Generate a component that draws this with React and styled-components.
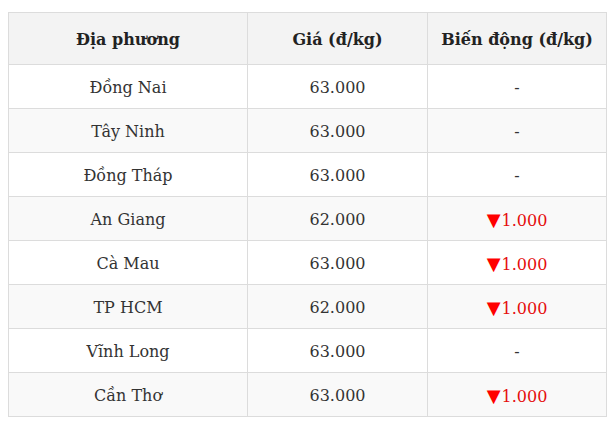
import React from "react";
import styled, { createGlobalStyle } from "styled-components";

const Global = createGlobalStyle`
  html, body { margin: 0; padding: 0; background: #fff; }
  body { font-family: "DejaVu Serif", "Liberation Serif", serif; }
`;

const Wrap = styled.div`
  padding: 12px 6px 0 8px;
`;

const Table = styled.table`
  width: 598px;
  border-collapse: collapse;
  color: #333;
  font-size: 16px;
  table-layout: fixed;
`;

const Col = styled.col`
  width: ${(p) => p.$w}px;
`;

const Th = styled.th`
  background: #f3f3f3;
  border: 1px solid #dcdcdc;
  height: 49px;
  padding: 2px 0 0;
  font-weight: bold;
  text-align: center;
  color: #222;
`;

const Row = styled.tr`
  background: ${(p) => (p.$alt ? "#f9f9f9" : "#fff")};
`;

const Td = styled.td`
  border: 1px solid #dcdcdc;
  height: 41px;
  padding: 2px 0 0;
  text-align: center;
  color: ${(p) => (p.$down ? "#e50c0c" : "#333")};
`;

const Arrow = styled.span`
  color: #ff0000;
  font-family: "DejaVu Sans", sans-serif;
  font-size: 18px;
  margin-right: 1px;
`;

const rows = [
  ["Đồng Nai", "63.000", null],
  ["Tây Ninh", "63.000", null],
  ["Đồng Tháp", "63.000", null],
  ["An Giang", "62.000", "1.000"],
  ["Cà Mau", "63.000", "1.000"],
  ["TP HCM", "62.000", "1.000"],
  ["Vĩnh Long", "63.000", null],
  ["Cần Thơ", "63.000", "1.000"],
];

export default function App() {
  return (
    <Wrap>
      <Global />
      <Table>
        <colgroup>
          <Col $w={239} />
          <Col $w={180} />
          <Col $w={179} />
        </colgroup>
        <thead>
          <tr>
            <Th>Địa phương</Th>
            <Th>Giá (đ/kg)</Th>
            <Th>Biến động (đ/kg)</Th>
          </tr>
        </thead>
        <tbody>
          {rows.map(([name, price, change], i) => (
            <Row key={name} $alt={i % 2 === 1}>
              <Td>{name}</Td>
              <Td>{price}</Td>
              <Td $down={!!change}>
                {change ? (
                  <>
                    <Arrow>▼</Arrow>
                    {change}
                  </>
                ) : (
                  "-"
                )}
              </Td>
            </Row>
          ))}
        </tbody>
      </Table>
    </Wrap>
  );
}
